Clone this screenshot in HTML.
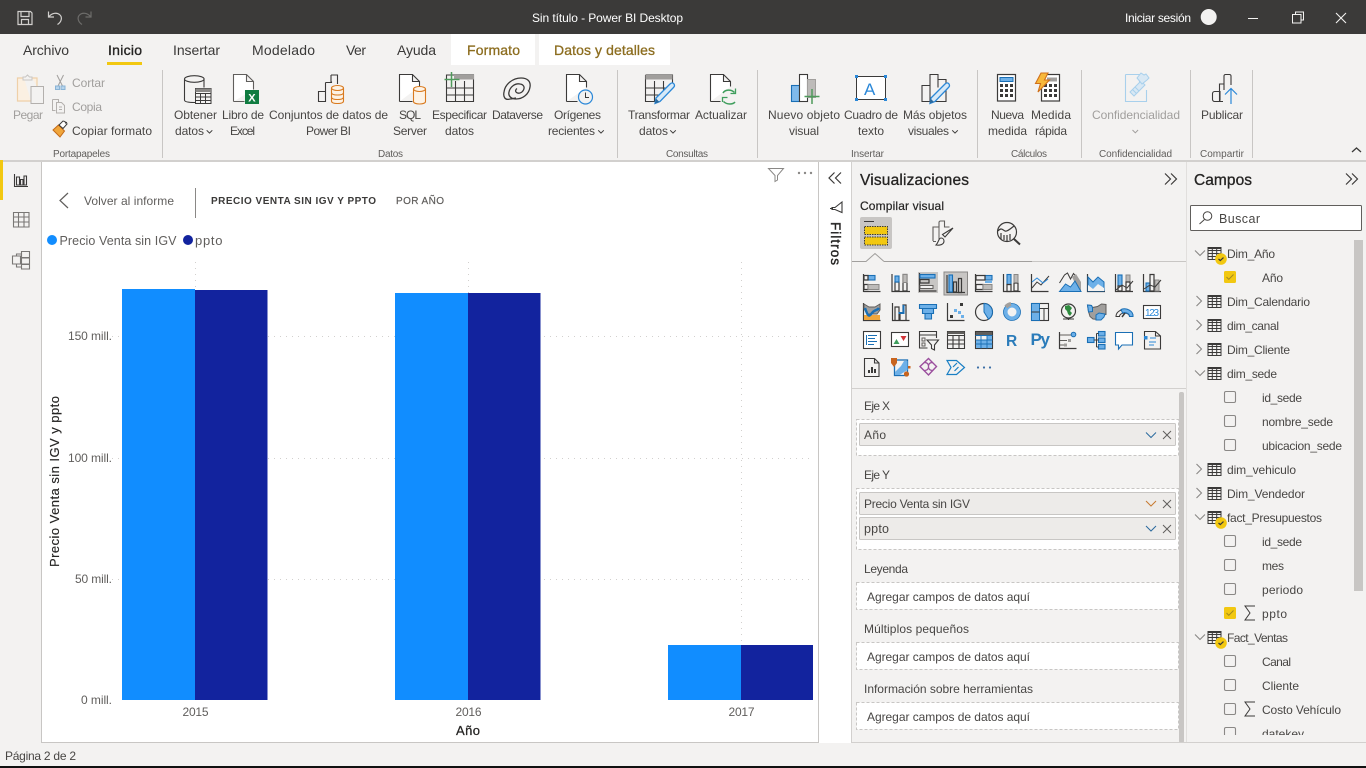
<!DOCTYPE html>
<html><head><meta charset="utf-8"><title>Sin título - Power BI Desktop</title>
<style>
html,body{margin:0;padding:0;width:1366px;height:768px;overflow:hidden;background:#f3f2f1}
svg{display:block}
text{font-family:"Liberation Sans",sans-serif;font-size:12px;fill:#484644}
.w{fill:#fff}
.g{fill:#a19f9d}
.s{font-size:10px;fill:#605e5c}
.t{font-size:14px;fill:#3b3a39}
.f{font-size:12px;fill:#484644}
.h{font-size:15.5px;fill:#252423;stroke:#252423;stroke-width:.3}
.ln{fill:none;stroke:#3b3a39;stroke-width:1.1}
.bl{fill:#6db0e8;stroke:#1a6fb5;stroke-width:1.1}
.gr{fill:#bdbbb9;stroke:#8a8886;stroke-width:1}
.dk{fill:none;stroke:#3b3a39;stroke-width:1.2}
</style></head><body>
<svg width="1366" height="768" viewBox="0 0 1366 768" xmlns="http://www.w3.org/2000/svg">
<defs>
<g id="tb"><path d="M-6.500-5.500h13v12h-13z M-6.500-2.500h13 M-6.500 .5h13 M-6.500 3.500h13 M-2.200-5.500v12 M2.200-5.500v12" fill="none" stroke="#3b3a39" stroke-width="1"/><path d="M-6.500-5.500h13v1.500h-13z" fill="#3b3a39"/></g>
<g id="badge"><circle r="5.800" fill="#f2c811"/><path d="M-2.500 0l1.800 1.600 3.200-3" fill="none" stroke="#3b3a39" stroke-width="1.200"/></g>
<path id="cd" d="M-5-2.500L0 2.500 5-2.500" fill="none" stroke="#8a8886" stroke-width="1.100"/>
<path id="cr" d="M-2.500-5L2.500 0-2.500 5" fill="none" stroke="#8a8886" stroke-width="1.100"/>
<rect id="cb" x="-5.500" y="-5.500" width="11" height="11" rx="1.500" fill="#f3f2f1" stroke="#8a8886" stroke-width="1.100"/>
<g id="cbk"><rect x="-6" y="-6" width="12" height="12" rx="1.500" fill="#f2c811"/><path d="M-3.500 0l2.300 2.300L3.500-2.500" fill="none" stroke="#a08a20" stroke-width="1"/></g>
<path id="sg" d="M5-7H-5L0 0-5 7H5" fill="none" stroke="#3b3a39" stroke-width="1"/>
<path id="cv" d="M-2.800-1.200L0 1.600 2.800-1.200" fill="none" stroke="#3b3a39" stroke-width="1"/>
</defs>

<!-- title bar -->
<rect width="1366" height="34" fill="#3b3a39"/>
<g fill="none" stroke="#d2d0ce" stroke-width="1.200">
<path d="M18 11.500h12.500l1.500 1.500v11.500H18z M21 11.500v5h8v-5 M21.500 24.500v-5h7v5"/>
<path d="M48.500 11.500v5.500h5.500 M49 16.500c3-3.500 8-4.500 11-1.500 2.500 2.500 1.500 7-2.500 9.500"/>
</g>
<g fill="none" stroke="#6d6c6a" stroke-width="1.200">
<path d="M91 11.500v5.500h-5.500 M90.500 16.500c-3-3.500-8-4.500-11-1.500-2.500 2.500-1.500 7 2.500 9.500"/>
</g>
<text class="w" x="532" y="22" textLength="151" style="font-size:12px">Sin título - Power BI Desktop</text>
<text class="w" x="1125" y="22" textLength="66" style="font-size:12px">Iniciar sesión</text>
<circle cx="1208.700" cy="17" r="8" fill="#f3f2f1"/>
<path d="M1248 18.500h10" stroke="#f3f2f1" stroke-width="1"/>
<path d="M1295.500 14v-2h8v8h-2 M1292.500 14.500h8.500v8.500h-8.500z" fill="none" stroke="#f3f2f1" stroke-width="1"/>
<path d="M1336 13l10 10M1346 13l-10 10" stroke="#f3f2f1" stroke-width="1.100"/>

<!-- tabs -->
<rect x="451" y="34" width="84" height="31" fill="#fff"/>
<rect x="539" y="34" width="131" height="31" fill="#fff"/>
<text class="t" x="23" y="55" textLength="46">Archivo</text>
<text class="t" x="108" y="55" textLength="34" style="stroke:#252423;stroke-width:.35;fill:#252423">Inicio</text>
<rect x="107" y="62" width="35" height="3" fill="#f2c811"/>
<text class="t" x="173" y="55" textLength="47">Insertar</text>
<text class="t" x="252" y="55" textLength="63">Modelado</text>
<text class="t" x="346" y="55" textLength="20">Ver</text>
<text class="t" x="397" y="55" textLength="39">Ayuda</text>
<text class="t" x="467" y="55" textLength="53" style="fill:#8c6d1f;stroke:#8c6d1f;stroke-width:.3">Formato</text>
<text class="t" x="554" y="55" textLength="101" style="fill:#8c6d1f;stroke:#8c6d1f;stroke-width:.3">Datos y detalles</text>

<!-- ribbon dividers -->
<g fill="#c8c6c4"><rect x="162" y="70" width="1" height="88"/><rect x="617" y="70" width="1" height="88"/><rect x="757" y="70" width="1" height="88"/><rect x="977" y="70" width="1" height="88"/><rect x="1081" y="70" width="1" height="88"/><rect x="1190" y="70" width="1" height="88"/><rect x="1252" y="70" width="1" height="88"/></g>

<!-- ribbon icons -->
<path d="M24 78h-6.500v23H31 M32 78h5v8" fill="#fbf0e2" stroke="#efd0a8" stroke-width="1.200"/>
<path d="M23 80v-3h2.500l2-2 2 2h2.500v3z" fill="#f3f2f1" stroke="#c8c6c4"/>
<rect x="31" y="86.500" width="12.500" height="17" fill="#f3f2f1" stroke="#b3b0ad"/>
<path d="M57 75l5.500 11M63.500 75L58 86" stroke="#a19f9d" fill="none"/>
<rect x="55.500" y="86" width="4" height="3.500" fill="#b7d4ec" stroke="#8ab4d6"/><rect x="61" y="86" width="4" height="3.500" fill="#b7d4ec" stroke="#8ab4d6"/>
<path d="M52.500 99.500h6v3 M52.500 99.500v11h3" fill="none" stroke="#b3b0ad"/><path d="M56.500 102.500h5l3 3v7.500h-8z M59 107h3M59 109.500h3" fill="#f3f2f1" stroke="#b3b0ad"/>
<path d="M53 130l5.500-5 6 6-4.500 6z" fill="#f0a63c" stroke="#c46a18"/>
<path d="M59 125l4-4 2 .5 .5 1.500 1-.5 .5 1.500-4 4.500z" fill="#fff" stroke="#3b3a39"/>
<path d="M184.500 79v21c0 1.500 3 2.500 10 2.500h.5 M204 79v8.500" fill="none" stroke="#3b3a39" stroke-width="1.100"/>
<ellipse cx="194.300" cy="79" rx="9.800" ry="3.300" fill="none" stroke="#3b3a39" stroke-width="1.100"/>
<path d="M195.500 88.500h15.500v15h-15.500z M195.500 93.500h15.500 M195.500 97h15.500 M195.500 100.500h15.500 M200.500 93.500v10 M205.500 93.500v10" fill="none" stroke="#3b3a39"/><rect x="195.500" y="88.500" width="15.500" height="3.500" fill="#8a8886"/>
<path d="M233.500 101.500v-27h13l7 7v8M246.500 74.500v7h7 M233.500 101.500h11" fill="#fff" stroke="#605e5c" stroke-width="1.100"/>
<rect x="245" y="90" width="14" height="14" fill="#107c41"/>
<text x="248.200" y="101.500" style="font-size:11px;font-weight:bold;fill:#fff">X</text>
<path d="M318.500 91.500h7v10h-7z M325.500 82.500h6v-1 M331 75h6.500v9M325.500 101.500V82.500M331 82.500V75" fill="none" stroke="#3b3a39" stroke-width="1.100"/>
<path d="M331.500 88v13c0 1.800 2.500 2.500 6 2.500s6-.7 6-2.500V88 M331.500 92.500c0 1.800 2.500 2.500 6 2.500s6-.7 6-2.500M331.500 97c0 1.800 2.500 2.500 6 2.500s6-.7 6-2.500" fill="#fdf3e6" stroke="#d97a1f" stroke-width="1.100"/><ellipse cx="337.500" cy="88" rx="6" ry="2.500" fill="#fdf3e6" stroke="#d97a1f" stroke-width="1.100"/>
<path d="M399.500 101.500v-27h13l7 7v5M412.500 74.500v7h7 M399.500 101.500h13" fill="#fff" stroke="#3b3a39" stroke-width="1.100"/>
<path d="M413.500 89v12.500c0 1.500 2.500 2.500 6 2.500s6-1 6-2.500V89" fill="#fdf3e6" stroke="#d97a1f" stroke-width="1.100"/><ellipse cx="419.500" cy="89" rx="6" ry="2.500" fill="#fdf3e6" stroke="#d97a1f" stroke-width="1.100"/>
<path d="M446.500 75h27v26.500h-27z M446.500 88h27M446.500 95h27M455.500 81v20.500M464.500 81v20.500" fill="none" stroke="#3b3a39" stroke-width="1.100"/><rect x="454" y="75" width="20" height="4.500" fill="#a19f9d"/>
<path d="M451.500 72v15M444.500 79.500h15" stroke="#4e9a5b" stroke-width="1.500"/>
<path d="M510 99c-5 1.500-7-2-6-7 1-8 9-14 17-14 6 0 10 3 9 9-1 7-7 12-14 12-5 0-8-3-7-7 1-5 6-9 11-8 3.500.5 5 3 3.500 6-1.500 3-5 4-7 2.500-1.500-1-1-3 .5-4 M510 99c3 0 4-1 6-1" fill="none" stroke="#3b3a39" stroke-width="1.300"/>
<path d="M566.500 101.500v-27h13l7 7v6M579.500 74.500v7h7 M566.500 101.500h11" fill="#fff" stroke="#3b3a39" stroke-width="1.100"/>
<circle cx="585.500" cy="97" r="7" fill="#f3f2f1" stroke="#2b88d8" stroke-width="1.200"/><path d="M585.500 92.500v5h3.500" fill="none" stroke="#3b3a39"/>
<path d="M645.500 75h27v13M645.500 75v26.500h13M645.500 88h20M645.500 95h16M654.500 81v20.500M663.500 81v10" fill="none" stroke="#3b3a39" stroke-width="1.100"/><rect x="645.500" y="75" width="27" height="4.500" fill="#a19f9d"/>
<path d="M656 98l14-14c1.500-1.500 3-1.500 4 0s.5 2.500-.5 3.500L660 101.500l-5 2z" fill="#d7e9f7" stroke="#2b88d8" stroke-width="1.300"/><path d="M655 103.500l1-5 3.500 3.500z" fill="#2b6a9e"/>
<path d="M710.500 101.500v-27h13l7 7v5M723.500 74.500v7h7 M710.500 101.500h10" fill="#fff" stroke="#3b3a39" stroke-width="1.100"/>
<path d="M723 93c2-3.500 8-4 11.500-.5M735 102c-2 2.500-8 3-11.500-.5" fill="none" stroke="#3f9e5d" stroke-width="1.500"/><path d="M735.500 88.500v5h-5M722.500 102v-4.500h5" fill="none" stroke="#3f9e5d" stroke-width="1.300"/>
<rect x="791.500" y="85.500" width="8" height="16" fill="#7fbaec" stroke="#1a6fb5" stroke-width="1.100"/>
<rect x="799.500" y="74.500" width="8" height="27" fill="#fff" stroke="#3b3a39" stroke-width="1.100"/>
<rect x="807.500" y="79.500" width="8" height="18" fill="#bdbbb9" stroke="#a19f9d"/>
<path d="M812 89v15M804.500 96.500h15" stroke="#4e9a5b" stroke-width="1.500"/>
<rect x="856.500" y="76.500" width="29" height="23" fill="#fff" stroke="#3b3a39" stroke-width="1"/>
<g fill="#2b88d8"><rect x="855" y="75" width="3" height="3"/><rect x="884" y="75" width="3" height="3"/><rect x="855" y="98" width="3" height="3"/><rect x="884" y="98" width="3" height="3"/></g>
<text x="864" y="95" style="font-size:17px;fill:#2b88d8">A</text>
<path d="M922 101.500V85.500h8V74.500h8v5h8v22z M930 85.500v16M938 79.500v8" fill="none" stroke="#3b3a39" stroke-width="1.100"/>
<path d="M931 98l14-14c1.500-1.500 3-1.500 4 0s.5 2.500-.5 3.500L935 101.500l-5 2z" fill="#d7e9f7" stroke="#2b88d8" stroke-width="1.300"/><path d="M929.500 103.500l1-5 3.500 3.500z" fill="#2b6a9e"/>
<rect x="997.500" y="74.500" width="18" height="26.500" fill="#fff" stroke="#3b3a39" stroke-width="1.200"/><rect x="1000" y="77.500" width="13" height="4" fill="#6db0e8" stroke="#1a6fb5"/>
<g fill="#3b3a39"><rect x="1000" y="84" width="3" height="3"/><rect x="1005" y="84" width="3" height="3"/><rect x="1010" y="84" width="3" height="3"/><rect x="1000" y="89" width="3" height="3"/><rect x="1005" y="89" width="3" height="3"/><rect x="1010" y="89" width="3" height="3"/><rect x="1000" y="94" width="3" height="3"/><rect x="1005" y="94" width="3" height="3"/><rect x="1010" y="94" width="3" height="3"/></g>
<rect x="1041.500" y="74.500" width="18" height="26.500" fill="#fff" stroke="#3b3a39" stroke-width="1.200"/><rect x="1047" y="77.500" width="10" height="4" fill="#a19f9d"/>
<g fill="#3b3a39"><rect x="1044" y="84" width="3" height="3"/><rect x="1049" y="84" width="3" height="3"/><rect x="1054" y="84" width="3" height="3"/><rect x="1044" y="89" width="3" height="3"/><rect x="1049" y="89" width="3" height="3"/><rect x="1054" y="89" width="3" height="3"/><rect x="1044" y="94" width="3" height="3"/><rect x="1049" y="94" width="3" height="3"/><rect x="1054" y="94" width="3" height="3"/></g>
<path d="M1041 73h7l-3.500 7h5L1038 92l2.500-8.500h-5z" fill="#f7b83a" stroke="#d0701a" stroke-width="1.100"/>
<path d="M1125.500 74.500h14v8M1125.500 74.500v27h21V90" fill="#f3f2f1" stroke="#a8d0ec" stroke-width="1.100"/>
<path d="M1130 92l11-11 4 4-11 11z M1132.500 89.500l4 4M1135 87l4 4" fill="#d8e8f4" stroke="#a8d0ec"/><path d="M1137 78l4-5 3 2 2-1 3 4-2 2-5 4z" fill="#d8e8f4" stroke="#a8d0ec"/>
<path d="M1219 91.500h-4.500c-1 0-2 1-2 2v6c0 1 1 2 2 2H1223 M1219.500 101.500V84h4.500V76c0-.8.7-1.500 1.500-1.500h4c.8 0 1.500.7 1.500 1.500v9 M1219 101c.5 0 1-.5 1-1v-9M1224 84v6" fill="none" stroke="#3b3a39" stroke-width="1.100"/>
<path d="M1231 104V89M1225 94.500l6-6 6 6" fill="none" stroke="#2b88d8" stroke-width="1.200"/>

<!-- ribbon text -->
<text class="g" x="13" y="119" textLength="30">Pegar</text>
<text class="g" x="72" y="87" textLength="33">Cortar</text>
<text class="g" x="72" y="111" textLength="30">Copia</text>
<text x="72" y="135" textLength="80">Copiar formato</text>
<text x="174" y="119" textLength="43">Obtener</text><text x="175" y="135" textLength="29">datos</text><use href="#cv" x="209.500" y="131.500"/>
<text x="222" y="119" textLength="42">Libro de</text><text x="230" y="135" textLength="25">Excel</text>
<text x="269" y="119" textLength="119">Conjuntos de datos de</text><text x="306" y="135" textLength="45">Power BI</text>
<text x="399" y="119" textLength="22">SQL</text><text x="393" y="135" textLength="34">Server</text>
<text x="432" y="119" textLength="55">Especificar</text><text x="445" y="135" textLength="29">datos</text>
<text x="492" y="119" textLength="51">Dataverse</text>
<text x="554" y="119" textLength="47">Orígenes</text><text x="548" y="135" textLength="47">recientes</text><use href="#cv" x="601" y="131.500"/>
<text x="628" y="119" textLength="62">Transformar</text><text x="639" y="135" textLength="29">datos</text><use href="#cv" x="673" y="131.500"/>
<text x="695" y="119" textLength="52">Actualizar</text>
<text x="768" y="119" textLength="72">Nuevo objeto</text><text x="789" y="135" textLength="30">visual</text>
<text x="844" y="119" textLength="54">Cuadro de</text><text x="858" y="135" textLength="26">texto</text>
<text x="903" y="119" textLength="64">Más objetos</text><text x="908" y="135" textLength="41">visuales</text><use href="#cv" x="955" y="131.500"/>
<text x="991" y="119" textLength="33">Nueva</text><text x="988" y="135" textLength="39">medida</text>
<text x="1031" y="119" textLength="40">Medida</text><text x="1035" y="135" textLength="32">rápida</text>
<text class="g" x="1092" y="119" textLength="88">Confidencialidad</text>
<path d="M1132.500 130l2.800 2.800 2.800-2.800" fill="none" stroke="#a19f9d"/>
<text x="1201" y="119" textLength="42">Publicar</text>
<text class="s" x="53" y="157" textLength="57">Portapapeles</text>
<text class="s" x="378" y="157" textLength="25">Datos</text>
<text class="s" x="666" y="157" textLength="42">Consultas</text>
<text class="s" x="851" y="157" textLength="33">Insertar</text>
<text class="s" x="1011" y="157" textLength="36">Cálculos</text>
<text class="s" x="1099" y="157" textLength="73">Confidencialidad</text>
<text class="s" x="1200" y="157" textLength="44">Compartir</text>
<path d="M1352 152l4.500-4 4.500 4" fill="none" stroke="#3b3a39" stroke-width="1.300"/>

<!-- left rail -->
<rect y="160" width="1366" height="2" fill="#d2d0ce"/>
<rect y="160" width="3" height="40" fill="#f2c811"/>
<path d="M14.500 174v12.500h13.500" fill="none" stroke="#3b3a39" stroke-width="1.100"/>
<path d="M16.500 177h3v8h-3zM20.500 179.500h2.500v5.500h-2.500zM24 176h2.500v9H24z" fill="none" stroke="#3b3a39" stroke-width="1.100"/>
<path d="M13.500 212.500h15.500v14.500h-15.500z M13.500 217h15.500M13.500 222h15.500M18.500 212.500v14.500M24 212.500v14.500" fill="none" stroke="#797775" stroke-width="1.100"/>
<path d="M12.500 256h8v8h-8z M21.500 251.500h8v6h-8z M21.500 258h8v6h-8z M21.500 264.500h8v4.500h-8z M16.500 256v-2h5 M16.500 264v3h5" fill="none" stroke="#797775" stroke-width="1.100"/>

<!-- canvas -->
<rect x="41" y="162" width="778" height="581" fill="#c8c6c4"/>
<rect x="42" y="162" width="776" height="580" fill="#fff"/>
<path d="M778 168.500h-9.500l6.500 7v6l2.500-1.500v-4.500l6-7z" fill="none" stroke="#8a8886"/>
<g fill="#8a8886"><circle cx="799" cy="173" r="1.200"/><circle cx="805" cy="173" r="1.200"/><circle cx="811" cy="173" r="1.200"/></g>
<path d="M68 193l-8 7.500 8 7.500" fill="none" stroke="#605e5c" stroke-width="1.200"/>
<text x="84" y="205" textLength="90" style="font-size:12px;fill:#605e5c">Volver al informe</text>
<rect x="195" y="188" width="1" height="30" fill="#8a8886"/>
<text x="211" y="204" textLength="165" style="font-size:10px;font-weight:bold;fill:#3b3a39">PRECIO VENTA SIN IGV Y PPTO</text>
<text x="396" y="204" textLength="48" style="font-size:10px;fill:#605e5c;stroke:#605e5c;stroke-width:.2">POR AÑO</text>
<circle cx="52" cy="240" r="5" fill="#118dff"/>
<text x="59.500" y="245" textLength="117" style="font-size:12.500px;fill:#605e5c">Precio Venta sin IGV</text>
<circle cx="188" cy="240" r="5" fill="#12239e"/>
<text x="195" y="245" textLength="27.500" style="font-size:13px;fill:#605e5c">ppto</text>

<g stroke="#d2d0ce" stroke-width="1" stroke-dasharray="1 5" fill="none">
<path d="M112 336.500h700M112 458.500h700M112 579.500h700"/>
<path d="M195.500 262v438M468.500 262v438M741.500 262v438"/>
</g>
<rect x="122" y="289" width="73" height="411" fill="#118dff"/>
<rect x="195" y="290" width="72.500" height="410" fill="#12239e"/>
<rect x="395" y="293" width="73" height="407" fill="#118dff"/>
<rect x="468" y="293" width="72.500" height="407" fill="#12239e"/>
<rect x="668" y="645" width="73" height="55" fill="#118dff"/>
<rect x="741" y="645" width="72" height="55" fill="#12239e"/>
<text x="68" y="340" style="font-size:12px;fill:#605e5c" textLength="44">150 mill.</text>
<text x="68" y="462" style="font-size:12px;fill:#605e5c" textLength="44">100 mill.</text>
<text x="75" y="583" style="font-size:12px;fill:#605e5c" textLength="37">50 mill.</text>
<text x="81" y="704" style="font-size:12px;fill:#605e5c" textLength="31">0 mill.</text>
<text x="182.500" y="716" textLength="26" style="font-size:12px;fill:#605e5c">2015</text>
<text x="455.500" y="716" textLength="26" style="font-size:12px;fill:#605e5c">2016</text>
<text x="728.500" y="716" textLength="26" style="font-size:12px;fill:#605e5c">2017</text>
<text x="456" y="735" textLength="24" style="font-size:13px;fill:#252423;stroke:#252423;stroke-width:.25">Año</text>
<text transform="translate(59 567) rotate(-90)" x="0" y="0" textLength="171" style="font-size:13px;fill:#252423;stroke:#252423;stroke-width:.15">Precio Venta sin IGV y ppto</text>

<!-- status -->
<text x="5" y="760" textLength="71" style="font-size:12px;fill:#484644">Página 2 de 2</text>
<rect y="766" width="1366" height="2" fill="#111"/>

<!-- filters -->
<rect x="819" y="162" width="32" height="581" fill="#fff"/>
<rect x="851" y="162" width="1" height="581" fill="#d2d0ce"/>
<path d="M834.500 172.500l-5.500 5.500 5.500 5.500M841 172.500l-5.500 5.500 5.500 5.500" fill="none" stroke="#3b3a39" stroke-width="1.200"/>
<path d="M842 202v10.500l-7-3h-3v-2h3z" fill="none" stroke="#3b3a39" stroke-width="1.100"/><path d="M830 208.500h3" stroke="#3b3a39"/>
<text transform="translate(831 222) rotate(90)" textLength="43" style="font-size:13.500px;fill:#252423;stroke:#252423;stroke-width:.4">Filtros</text>

<!-- visualizaciones -->
<text class="h" x="860" y="185" textLength="109">Visualizaciones</text>
<path d="M1165 173.500l5.500 5.500-5.500 5.500M1171 173.500l5.500 5.500-5.500 5.500" fill="none" stroke="#3b3a39" stroke-width="1.200"/>
<text x="860" y="210" textLength="84" style="font-size:12px;fill:#252423;stroke:#252423;stroke-width:.2">Compilar visual</text>
<rect x="860" y="217" width="32" height="32" rx="2" fill="#c8c6c4"/>
<path d="M864 221.500h10" stroke="#3b3a39"/>
<rect x="864.500" y="226.500" width="23" height="8" fill="#f2c811" stroke="#3b3a39" stroke-dasharray="1.500 1"/>
<rect x="864.500" y="237" width="23" height="8" fill="#f2c811" stroke="#3b3a39" stroke-dasharray="1.500 1"/>
<path d="M933 241v-14h6v-4.500c0-.8.7-1.500 1.500-1.500h4v6h5" fill="none" stroke="#605e5c" stroke-width="1.100"/>
<path d="M933 241.500h3M939 227v13" stroke="#605e5c" fill="none"/>
<path d="M953 228l-8 9-2.500-2.500zM936 245c3 .5 8 0 8-4 0-1.500-1-3-3-3-2.500 0-2 4-5 7z" fill="#f3f2f1" stroke="#3b3a39" stroke-width="1.100"/>
<circle cx="1007" cy="232" r="9.500" fill="none" stroke="#3b3a39" stroke-width="1.200"/>
<path d="M1014 239l6 5.500" stroke="#3b3a39" stroke-width="2"/>
<path d="M998 231c3-4 5-1 7 0s5-2 9-5" fill="none" stroke="#3b3a39" stroke-width="1.200"/>
<path d="M1001 233v6M1004 235v5M1007 235v6M1010 234v6" stroke="#3b3a39" stroke-width="1.200"/>
<path d="M852 261.500h14l9-8 9 8" fill="#f3f2f1" stroke="#a19f9d"/>
<path d="M884 261.500h148" stroke="#a19f9d"/>
<path d="M1032 261.500h154" stroke="#c8c6c4"/>

<!-- viz icons -->
<path d="M863.500 274v18M863.500 291.500h17" class="dk"/>
<rect x="868" y="275.500" width="7" height="4.500" class="bl"/><path d="M864 275.500h4v4.500h-4zM864 284.500h4v5h-4z" class="dk"/><rect x="868" y="284.500" width="11" height="5" class="gr"/>
<path d="M892 274v17.500h18" class="dk"/><path d="M895 282h4v9h-4zM903 274.500h4v16.500h-4z" class="dk"/><rect x="895" y="276" width="4" height="6" class="bl"/><rect x="903" y="274.500" width="4" height="8" class="gr"/>
<rect x="918" y="272" width="20" height="21" fill="#c8c6c4"/>
<path d="M919.500 273v19M919.500 291h17" class="dk"/><rect x="920" y="274.500" width="15" height="3.500" class="bl"/><path d="M920 279.500h9v3.500h-9z" class="dk"/><path d="M920 285.500h13v3h-13z" fill="#f3f2f1" stroke="#605e5c"/>
<rect x="944" y="272" width="23.500" height="23" fill="#c8c6c4" stroke="#8a8886"/>
<path d="M947 275v17.500h18" class="dk"/><rect x="949" y="275" width="3.500" height="17" class="bl"/><path d="M953.500 282h3v10h-3zM958.500 278.500h3v14h-3z" class="dk"/>
<path d="M975.500 274v18M975.500 291.500h17" class="dk"/><rect x="985" y="275.500" width="7" height="4.500" class="bl"/><path d="M976 275.500h9v4.500h-9zM976 284.500h7v5h-7z" class="dk"/><rect x="983" y="284.500" width="9" height="5" class="gr"/><rect x="985" y="281" width="7" height="2" fill="#6db0e8"/>
<path d="M1003.500 274v17.500h17" class="dk"/><rect x="1007" y="274.500" width="4" height="10" class="bl"/><path d="M1007 284.500h4v7h-4zM1014 283h4v8h-4z" class="dk"/><rect x="1014" y="274.500" width="4" height="8" class="gr"/>
<path d="M1031.500 274v17.500h17" class="dk"/><path d="M1032 288l5-6 4 3 8-9" fill="none" stroke="#3b3a39"/><path d="M1032 282l5-4 6 5 5-4" fill="none" stroke="#2b88d8"/>
<path d="M1059.500 283l5-8 3-2 3 6 3-5.500 3 3.500 2 3.500v10h-3" fill="#f3f2f1" stroke="#3b3a39"/><path d="M1072 277l4-3 5 8v9l-5-6z" fill="#a19f9d"/><path d="M1059.500 291.500l6-7.500 5 3 4.500-6 6 10.500z" fill="#6db0e8" stroke="#1a6fb5"/>
<path d="M1087.500 274v17.500h17.500" class="dk"/><path d="M1088 277l5 5 5-5 6 5v9h-16z" fill="#6db0e8" stroke="#1a6fb5"/><path d="M1088 285l5 4 5-5 6 4v3h-16z" fill="#f3f2f1"/>
<path d="M1115.500 274v17.500h17.500" class="dk"/><rect x="1118" y="275" width="4" height="11" class="bl"/><rect x="1126" y="275" width="4" height="7" class="gr"/><path d="M1118 286h4v5h-4zM1126 282h4v9h-4z" class="dk"/><path d="M1116 290l6-5 5 3 6-7" fill="none" stroke="#3b3a39"/>
<path d="M1143.500 274v17.500h17.500" class="dk"/><rect x="1146" y="283" width="4" height="8" class="bl"/><path d="M1150 274.500h4v16.500h-4z" class="dk"/><rect x="1155" y="280" width="4" height="11" class="gr"/><path d="M1144 289l6-4 5 2 6-7" fill="none" stroke="#3b3a39"/>
<path d="M863.500 303v17.500h17" class="dk"/>
<path d="M864 304l5 3h6l5-3v6l-3 4h-9l-4-5z" fill="#a19f9d" stroke="#605e5c"/><rect x="864" y="315" width="16" height="5" fill="#f0a63c"/><path d="M865 308c3 9 4 9 7 5s5-2 7-5" fill="none" stroke="#1a6fb5" stroke-width="2.500"/>
<path d="M892.500 303v17.500h17" class="dk"/><path d="M895 320v-13h4v13M900 320v-7h3v-8h3v15" class="dk"/><path d="M898.500 313h5v-8" fill="none" stroke="#1a6fb5" stroke-width="2"/>
<path d="M919.500 304.500h17v4h-17z" class="bl"/><path d="M922.500 308.500h11v5h-11z" class="bl"/><path d="M925 313.500h6.500v5.500H925z" class="bl"/>
<path d="M947.500 303v17.500h17" class="dk"/><rect x="950" y="315" width="3" height="3" fill="#3b3a39"/><rect x="954" y="309" width="3" height="3" fill="#6db0e8"/><rect x="958" y="311" width="3" height="3" fill="#6db0e8"/><rect x="960" y="303" width="3" height="3" fill="#3b3a39"/><rect x="961" y="315" width="3" height="3" fill="#6db0e8"/>
<circle cx="984" cy="312" r="8.500" fill="#f3f2f1" stroke="#3b3a39" stroke-width="1.200"/><path d="M984 303.500a8.500 8.500 0 0 1 4.500 15.700L984 312z" fill="#6db0e8" stroke="#1a6fb5"/>
<circle cx="1012" cy="312" r="6.500" fill="none" stroke="#6db0e8" stroke-width="4"/><circle cx="1012" cy="312" r="8.500" fill="none" stroke="#1a6fb5" stroke-width=".8"/><path d="M1006 307a8 8 0 0 1 5-3" stroke="#a19f9d" stroke-width="4" fill="none"/>
<rect x="1031.500" y="303.500" width="17" height="17" fill="#f3f2f1" stroke="#3b3a39" stroke-width="1.100"/><rect x="1031.500" y="303.500" width="8" height="17" fill="#6db0e8" stroke="#1a6fb5"/><path d="M1031.500 312h8M1039.500 308.500h9M1044 308.500v12" stroke="#3b3a39" fill="none"/>
<circle cx="1068.500" cy="311" r="7" fill="#f3f2f1" stroke="#3b3a39" stroke-width="1.200"/><path d="M1065 306l4-1 3 3-2 3 2 2-2 3-2-2-1-3-2-2z" fill="#2e8b3e"/><path d="M1063 319h11M1068.500 318v2" stroke="#3b3a39"/>
<path d="M1087.500 305l4 .5 1 2 5-1 4-2.500 4.500.5v10l-5 1-2 4-6-.5-3-2.500-1.500-5z" fill="#a19f9d" stroke="#605e5c"/><path d="M1087.500 305l4 .5 1 2v4l-4 .5z M1096 320v-5l3-2 6 1-1 3-3 3z" fill="#6db0e8" stroke="#1a6fb5"/>
<path d="M1116 316.500a8.500 7 0 0 1 17 0h-3.500a5 3.500 0 0 0-10 0z" fill="#f3f2f1" stroke="#3b3a39"/><path d="M1121 309.500a8.500 7 0 0 1 12 7h-3.500a5 3.500 0 0 0-7-3.500z" fill="#6db0e8" stroke="#1a6fb5"/><path d="M1122 317l3-4" stroke="#3b3a39" stroke-width="1.500"/>
<rect x="1143.500" y="305.500" width="17" height="13" fill="#fff" stroke="#3b3a39" stroke-width="1.100"/><text x="1145" y="316" textLength="14" style="font-size:10px;fill:#2b88d8">123</text>
<rect x="863.500" y="331.500" width="17" height="17" fill="#fff" stroke="#3b3a39" stroke-width="1.100"/><path d="M866.500 335v10" stroke="#1a6fb5"/><path d="M868 335.500h9M868 338.500h7M868 341.500h9M868 344.500h6" stroke="#1a6fb5"/>
<rect x="891.500" y="332.500" width="17" height="14" fill="#fff" stroke="#3b3a39" stroke-width="1.100"/><path d="M893.500 344l3-5 3 5z" fill="#3f9e5d"/><path d="M900.500 336h6l-3 5z" fill="#d13438"/>
<path d="M919.500 344v-12.500h17V338M919.500 344v4h8" fill="none" stroke="#3b3a39" stroke-width="1.100"/><path d="M919.500 335h17" stroke="#3b3a39"/><rect x="922" y="338" width="3" height="3" fill="none" stroke="#605e5c"/><rect x="922" y="343" width="3" height="3" fill="none" stroke="#605e5c"/><path d="M927 340h11.500l-4 5v5l-3-1.500V345z" fill="#f3f2f1" stroke="#3b3a39" stroke-width="1.100"/>
<path d="M947.500 331.500h17v17h-17z M947.500 335.500h17M947.500 340h17M947.500 344h17M953 335.500v13M959 335.500v13" fill="#f3f2f1" stroke="#3b3a39" stroke-width="1.100"/><rect x="947.500" y="331.500" width="17" height="2.500" fill="#605e5c"/>
<rect x="975.500" y="331.500" width="17" height="17" fill="#f3f2f1" stroke="#3b3a39" stroke-width="1.100"/><rect x="976" y="332" width="16" height="3" fill="#605e5c"/><rect x="976" y="340" width="16" height="8" fill="#6db0e8"/><rect x="987" y="335" width="5" height="5" fill="#6db0e8"/><path d="M975.500 335.500h17M975.500 340h17M975.500 344h17M981 335.500v13M987 335.500v13" stroke="#1a6fb5" stroke-width=".9"/>
<text x="1006" y="346" style="font-size:15.500px;font-weight:bold;fill:#2b7cba">R</text>
<text x="1030.500" y="345" style="font-size:17px;font-weight:bold;fill:#2b7cba" textLength="19.500">Py</text>
<path d="M1059.500 332v16.500h17" class="dk"/><path d="M1060 335h12M1060 340.500h7M1060 345h4" stroke="#605e5c" fill="none"/><circle cx="1073.500" cy="334.500" r="2.300" fill="#6db0e8" stroke="#1a6fb5"/><rect x="1068" y="339" width="3" height="3" fill="#a19f9d"/><rect x="1064" y="343.500" width="3" height="3" fill="#a19f9d"/>
<rect x="1087.500" y="337.500" width="6.500" height="5" class="bl"/><rect x="1098.500" y="331.500" width="6.500" height="4.500" class="bl"/><rect x="1098.500" y="338" width="6.500" height="4.500" class="bl"/><rect x="1098.500" y="344.500" width="6.500" height="4.500" class="bl"/><path d="M1094 340h4.500M1096.500 333.500v13.500M1096.500 333.500h2M1096.500 347h2" stroke="#3b3a39" fill="none"/>
<path d="M1115.500 332.500h17v12.500h-10.500l-3.500 4v-4h-3z" fill="#fff" stroke="#1a6fb5" stroke-width="1.100"/>
<path d="M1144.500 331.500h11l5 4.500v13h-16z M1155.500 331.500v4.500h5" fill="#f3f2f1" stroke="#3b3a39" stroke-width="1.100"/><rect x="1144" y="336" width="3.500" height="3.500" fill="#2b88d8"/><path d="M1150 338h6M1149 342h7M1149 345h5" stroke="#2b88d8" fill="none"/>
<path d="M864.500 358.500h10l4.500 4.500v13.500h-14.500z M874.500 358.500v4.500h4.500" fill="#f3f2f1" stroke="#3b3a39" stroke-width="1.100"/><path d="M868 373v-3h2v3zM871 373v-6h2v6zM874 373v-4h2v4z" fill="#3b3a39"/>
<rect x="894.500" y="360" width="13" height="15.500" fill="#f3f2f1" stroke="#1a6fb5" stroke-width="1.300"/><path d="M895 372l6-6 3-5h3.500v9l-8 5h-4.500z" fill="#6db0e8"/><path d="M891 358h6v5l-3 4-3-4z" fill="#c8641e"/><circle cx="906.500" cy="374" r="2.600" fill="#c8641e"/><rect x="908" y="366" width="2.500" height="2.500" fill="#c8641e"/>
<path d="M928.500 358.500l8 8-8 8.500-8.500-8.500z" fill="none" stroke="#9b4f9e" stroke-width="1.400"/><path d="M924.500 362.500c3 0 4 2 4 4s-1 4-4 4M932.500 362.500c-3 0-4 2-4 4s1 4 4 4" fill="none" stroke="#9b4f9e" stroke-width="1.200"/>
<path d="M947 360.500h9.500l8 7-8 7H947l4-7z M953 367l4-4M954.500 371l4-4" fill="#f3f2f1" stroke="#1a7fc4" stroke-width="1.200"/>
<g fill="#3b6ea5"><circle cx="978" cy="367.500" r="1.100"/><circle cx="984" cy="367.500" r="1.100"/><circle cx="990" cy="367.500" r="1.100"/></g>
<rect x="852" y="388" width="334" height="1" fill="#d2d0ce"/>
<rect x="1179" y="392" width="5" height="351" rx="2" fill="#c8c6c4"/>

<!-- wells -->
<text x="864" y="410" textLength="26" style="font-size:12px">Eje X</text>
<rect x="856.500" y="419.500" width="322" height="36" fill="#fff" stroke="#c8c6c4" stroke-dasharray="3 2"/>
<rect x="859.500" y="423.500" width="316" height="22" rx="1" fill="#edebe9" stroke="#c8c6c4"/>
<text x="864" y="439" textLength="22" style="font-size:12px">Año</text>
<path d="M1146 432.500l5 5 5-5" fill="none" stroke="#2b6a9e"/><path d="M1163 431l8 8M1171 431l-8 8" stroke="#605e5c"/>
<text x="864" y="479" textLength="26" style="font-size:12px">Eje Y</text>
<rect x="856.500" y="488.500" width="322" height="61" fill="#fff" stroke="#c8c6c4" stroke-dasharray="3 2"/>
<rect x="859.500" y="492.500" width="316" height="22" rx="1" fill="#edebe9" stroke="#c8c6c4"/>
<text x="864" y="508" textLength="106" style="font-size:12px">Precio Venta sin IGV</text>
<path d="M1146 501l5 5 5-5" fill="none" stroke="#c87a30"/><path d="M1163 500l8 8M1171 500l-8 8" stroke="#605e5c"/>
<rect x="859.500" y="517.500" width="316" height="22" rx="1" fill="#edebe9" stroke="#c8c6c4"/>
<text x="864" y="533" textLength="25" style="font-size:12.500px">ppto</text>
<path d="M1146 526l5 5 5-5" fill="none" stroke="#2b6a9e"/><path d="M1163 525l8 8M1171 525l-8 8" stroke="#605e5c"/>

<text x="864" y="573" textLength="44" style="font-size:12px">Leyenda</text>
<rect x="856.500" y="582.500" width="322" height="27" fill="#fff" stroke="#c8c6c4" stroke-dasharray="3 2"/>
<text x="867" y="601" textLength="163" style="font-size:12px">Agregar campos de datos aquí</text>
<text x="864" y="633" textLength="105" style="font-size:12px">Múltiplos pequeños</text>
<rect x="856.500" y="642.500" width="322" height="27" fill="#fff" stroke="#c8c6c4" stroke-dasharray="3 2"/>
<text x="867" y="661" textLength="163" style="font-size:12px">Agregar campos de datos aquí</text>
<text x="864" y="693" textLength="169" style="font-size:12px">Información sobre herramientas</text>
<rect x="856.500" y="702.500" width="322" height="27" fill="#fff" stroke="#c8c6c4" stroke-dasharray="3 2"/>
<text x="867" y="721" textLength="163" style="font-size:12px">Agregar campos de datos aquí</text>

<!-- campos -->
<rect x="1186" y="162" width="1" height="581" fill="#e1dfdd"/>
<rect x="852" y="742" width="514" height="1" fill="#d2d0ce"/>
<text class="h" x="1194" y="185" textLength="58">Campos</text>
<path d="M1346 173.500l5.500 5.500-5.500 5.500M1352 173.500l5.500 5.500-5.500 5.500" fill="none" stroke="#3b3a39" stroke-width="1.200"/>
<rect x="1190.500" y="205.500" width="171" height="25" rx="1" fill="#fff" stroke="#605e5c"/>
<circle cx="1207.500" cy="216" r="4.300" fill="none" stroke="#484644"/><path d="M1204.500 219.500l-5 4.500" stroke="#484644"/>
<text x="1219" y="223" textLength="41" style="font-size:12.500px">Buscar</text>
<rect x="1354" y="240" width="9" height="351" fill="#c8c6c4"/>

<use href="#cd" x="1200" y="253"/><use href="#tb" x="1214.500" y="253"/><use href="#badge" x="1221" y="259"/><text class="f" x="1227" y="258" textLength="48">Dim_Año</text>
<use href="#cbk" x="1230" y="277"/><text class="f" x="1262" y="282" textLength="21">Año</text>
<use href="#cr" x="1199" y="301"/><use href="#tb" x="1214.500" y="301"/><text class="f" x="1227" y="306" textLength="83">Dim_Calendario</text>
<use href="#cr" x="1199" y="325"/><use href="#tb" x="1214.500" y="325"/><text class="f" x="1227" y="330" textLength="52">dim_canal</text>
<use href="#cr" x="1199" y="349"/><use href="#tb" x="1214.500" y="349"/><text class="f" x="1227" y="354" textLength="63">Dim_Cliente</text>
<use href="#cd" x="1200" y="373"/><use href="#tb" x="1214.500" y="373"/><text class="f" x="1227" y="378" textLength="50">dim_sede</text>
<use href="#cb" x="1230" y="397"/><text class="f" x="1262" y="402" textLength="40">id_sede</text>
<use href="#cb" x="1230" y="421"/><text class="f" x="1262" y="426" textLength="71">nombre_sede</text>
<use href="#cb" x="1230" y="445"/><text class="f" x="1262" y="450" textLength="80">ubicacion_sede</text>
<use href="#cr" x="1199" y="469"/><use href="#tb" x="1214.500" y="469"/><text class="f" x="1227" y="474" textLength="69">dim_vehiculo</text>
<use href="#cr" x="1199" y="493"/><use href="#tb" x="1214.500" y="493"/><text class="f" x="1227" y="498" textLength="78">Dim_Vendedor</text>
<use href="#cd" x="1200" y="517"/><use href="#tb" x="1214.500" y="517"/><use href="#badge" x="1221" y="523"/><text class="f" x="1227" y="522" textLength="95">fact_Presupuestos</text>
<use href="#cb" x="1230" y="541"/><text class="f" x="1262" y="546" textLength="40">id_sede</text>
<use href="#cb" x="1230" y="565"/><text class="f" x="1262" y="570" textLength="22">mes</text>
<use href="#cb" x="1230" y="589"/><text class="f" x="1262" y="594" textLength="41">periodo</text>
<use href="#cbk" x="1230" y="613"/><use href="#sg" x="1250" y="613"/><text class="f" x="1262" y="618" textLength="25">ppto</text>
<use href="#cd" x="1200" y="637"/><use href="#tb" x="1214.500" y="637"/><use href="#badge" x="1221" y="643"/><text class="f" x="1227" y="642" textLength="61">Fact_Ventas</text>
<use href="#cb" x="1230" y="661"/><text class="f" x="1262" y="666" textLength="29">Canal</text>
<use href="#cb" x="1230" y="685"/><text class="f" x="1262" y="690" textLength="37">Cliente</text>
<use href="#cb" x="1230" y="709"/><use href="#sg" x="1250" y="709"/><text class="f" x="1262" y="714" textLength="79">Costo Vehículo</text>
<use href="#cb" x="1230" y="733"/><text class="f" x="1262" y="738" textLength="42">datekey</text>
<rect x="1187" y="735" width="179" height="7" fill="#f3f2f1"/>
</svg>
</body></html>
